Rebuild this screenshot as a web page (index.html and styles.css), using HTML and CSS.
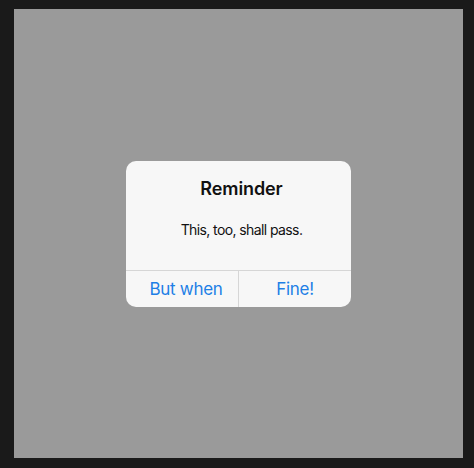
FILE: index.html
```html
<!DOCTYPE html>
<html>
<head>
<meta charset="utf-8">
<link rel="stylesheet" href="styles.css">
</head>
<body>
<div class="frame">
  <div class="dialog">
    <div class="content">
      <div class="title">Reminder</div>
      <div class="message">This, too, shall pass.</div>
    </div>
    <div class="actions">
      <div class="btn btn-left">But when</div>
      <div class="btn btn-right">Fine!</div>
    </div>
  </div>
</div>
</body>
</html>
```

FILE: styles.css
```css
html, body {
  margin: 0;
  padding: 0;
  background: #1a1a1a;
  width: 474px;
  height: 468px;
  font-family: Inter, "Liberation Sans", sans-serif;
}
.frame {
  margin: 9px 0 0 14px;
  width: 449px;
  height: 449px;
  background: #9a9a9a;
  display: flex;
  align-items: center;
  justify-content: center;
}
.dialog {
  width: 225px;
  height: 146px;
  background: #f7f7f7;
  border-radius: 10px;
  overflow: hidden;
  display: flex;
  flex-direction: column;
}
.content {
  height: 110px;
  box-sizing: border-box;
  padding: 17px 0 0 6px;
  text-align: center;
  border-bottom: 1px solid #d6d6d6;
}
.title {
  font-size: 18px;
  line-height: 22px;
  font-weight: 600;
  letter-spacing: -0.1px;
  color: #111;
}
.message {
  margin-top: 21px;
  font-size: 14px;
  line-height: 18px;
  letter-spacing: -0.6px;
  color: #111;
}
.actions {
  flex: 1;
  display: flex;
}
.btn {
  box-sizing: border-box;
  display: flex;
  align-items: center;
  justify-content: center;
  padding-top: 1px;
  font-size: 17px;
  letter-spacing: -0.3px;
  color: #1e7fe6;
}
.btn-left {
  flex: none;
  width: 112px;
  padding-left: 8px;
}
.btn-right {
  flex: 1;
  border-left: 1px solid #d6d6d6;
}
```
